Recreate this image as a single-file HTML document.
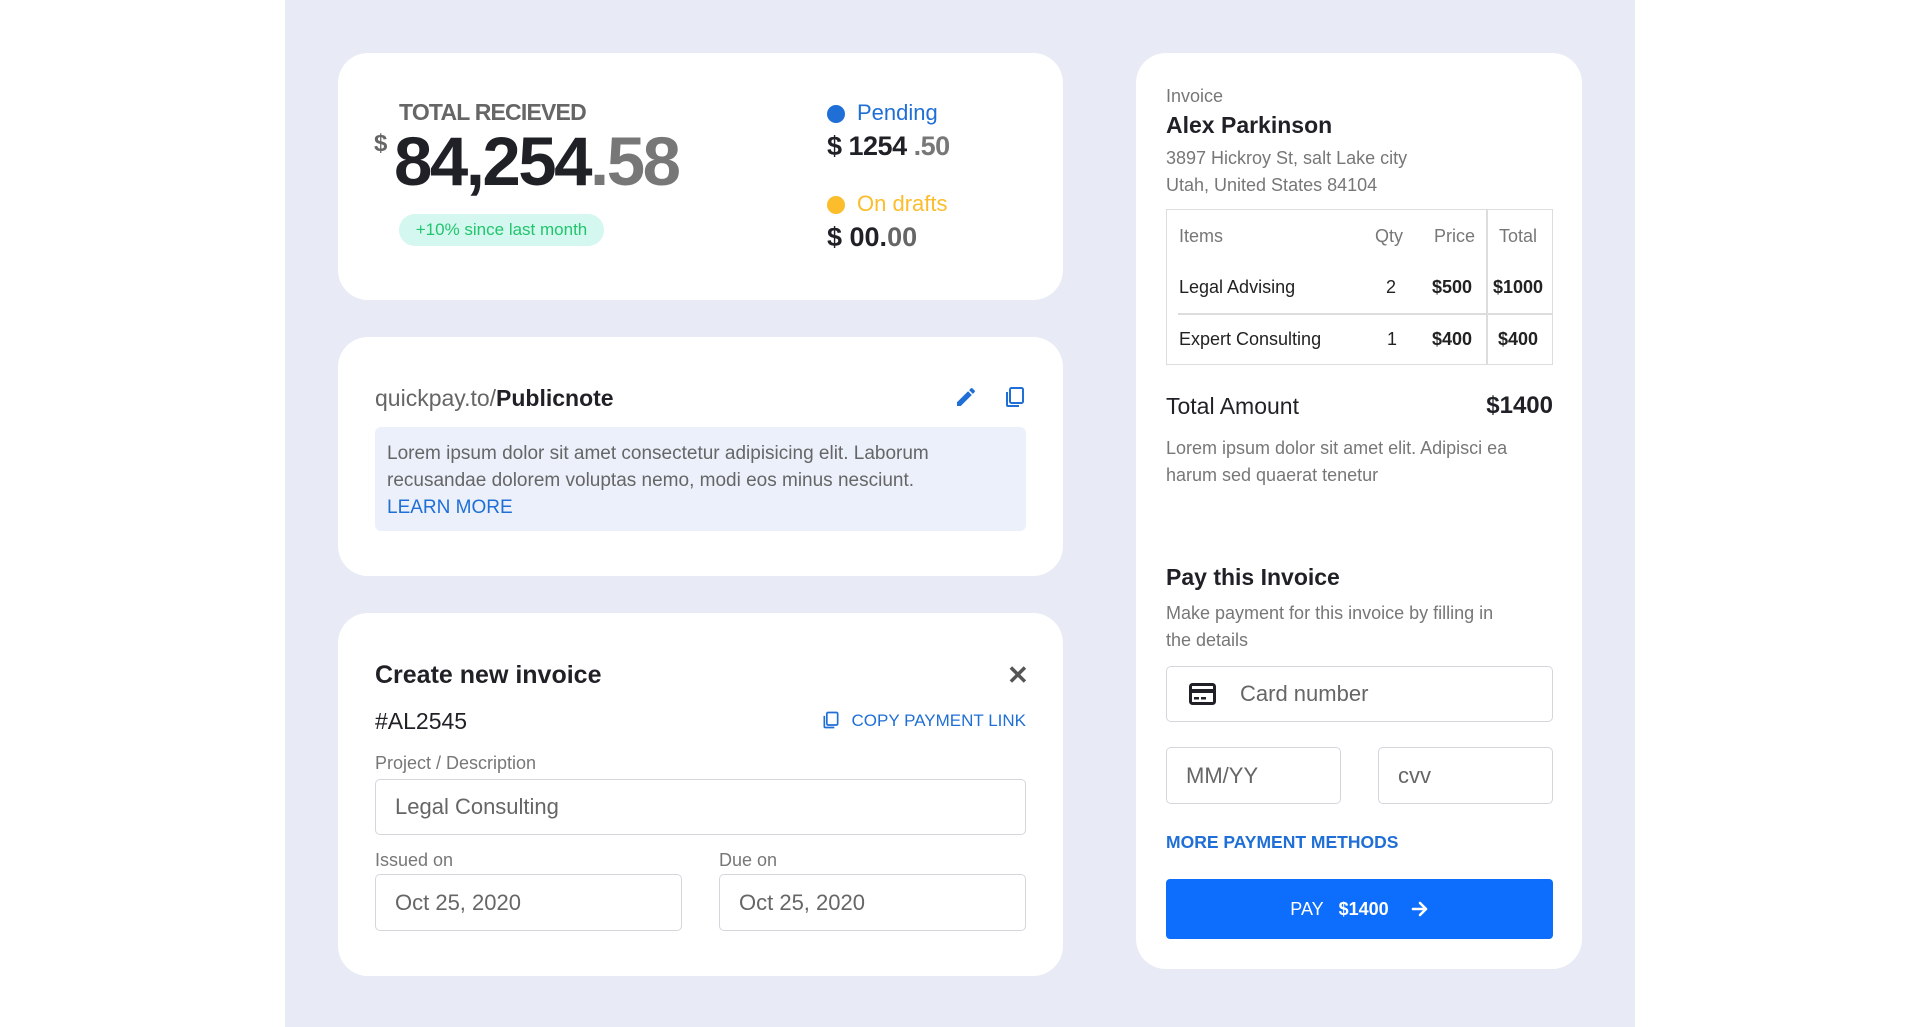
<!DOCTYPE html>
<html><head><meta charset="utf-8"><style>
*{box-sizing:border-box;margin:0;padding:0}
body{width:1920px;height:1027px;background:#fff;font-family:"Liberation Sans",sans-serif;position:relative;overflow:hidden;color:#222}
.bg{position:absolute;left:285px;top:0;width:1350px;height:1027px;background:#e8eaf5}
.card{position:absolute;background:#fff;border-radius:30px}
.a{position:absolute;white-space:nowrap}
.gray{color:#777}
.blue{color:#1f6fd6}
.inp{position:absolute;border:1.5px solid #d4d6dc;border-radius:5px;background:#fff;font-size:22px;color:#666;padding-left:19px;display:flex;align-items:center}
</style></head><body>
<div class="bg"></div>

<div class="card" style="left:338px;top:53px;width:725px;height:247px"></div>
<div class="a" style="left:399px;top:99px;font-size:23px;color:#666;font-weight:bold;letter-spacing:-0.8px">TOTAL RECIEVED</div>
<div class="a" style="left:374px;top:130px;font-size:24px;color:#666;font-weight:bold">$</div>
<div class="a" style="left:394px;top:122px;font-size:69px;font-weight:bold;letter-spacing:-2.5px;color:#1f2126">84,254<span style="color:#777">.58</span></div>
<div class="a" style="left:399px;top:214px;width:205px;height:32px;border-radius:16px;background:#d4f7ef;color:#22c56e;font-size:17px;text-align:center;line-height:32px">+10% since last month</div>
<div class="a" style="left:827px;top:105px;width:18px;height:18px;border-radius:50%;background:#1f6fd6"></div>
<div class="a blue" style="left:857px;top:100px;font-size:22px">Pending</div>
<div class="a" style="left:827px;top:131px;font-size:27px;font-weight:bold;color:#1f2126;letter-spacing:-0.5px">$ 1254 <span style="color:#777">.50</span></div>
<div class="a" style="left:827px;top:196px;width:18px;height:18px;border-radius:50%;background:#fbbd2c"></div>
<div class="a" style="left:857px;top:191px;font-size:22px;color:#fbbd2c">On drafts</div>
<div class="a" style="left:827px;top:222px;font-size:27px;font-weight:bold;color:#1f2126">$ 00.<span style="color:#666">00</span></div>

<div class="card" style="left:338px;top:337px;width:725px;height:239px"></div>
<div class="a" style="left:375px;top:385px;font-size:23px;color:#666">quickpay.to/<span style="color:#1f2126;font-weight:bold">Publicnote</span></div>
<svg class="a" style="left:954px;top:385px" width="24" height="24" viewBox="0 0 24 24"><path d="M3 17.25V21h3.75L17.8 9.94l-3.75-3.75L3 17.25zM20.7 7.04a1 1 0 000-1.41l-2.34-2.34a1 1 0 00-1.41 0l-1.83 1.83 3.75 3.75 1.83-1.83z" fill="#1f6fd6"/></svg>
<svg class="a" style="left:1003px;top:385px" width="24" height="24" viewBox="0 0 24 24" fill="none" stroke="#1f6fd6" stroke-width="2"><rect x="7" y="3" width="13" height="15" rx="1.5"/><path d="M4 7v13a1 1 0 001 1h11"/></svg>
<div class="a" style="left:375px;top:427px;width:651px;height:104px;background:#ebf0fb;border-radius:6px"></div>
<div class="a" style="left:387px;top:440px;font-size:19px;line-height:27px;color:#666">Lorem ipsum dolor sit amet consectetur adipisicing elit. Laborum<br>recusandae dolorem voluptas nemo, modi eos minus nesciunt.<br><span class="blue">LEARN MORE</span></div>

<div class="card" style="left:338px;top:613px;width:725px;height:363px"></div>
<div class="a" style="left:375px;top:661px;font-size:25px;font-weight:bold;color:#1f2126">Create new invoice</div>
<div class="a" style="left:1007px;top:660px;font-size:26px;font-weight:bold;color:#555">✕</div>
<div class="a" style="left:375px;top:708px;font-size:23px;color:#1f2126">#AL2545</div>
<svg class="a" style="left:821px;top:710px" width="20" height="20" viewBox="0 0 24 24" fill="none" stroke="#1f6fd6" stroke-width="2"><rect x="7" y="3" width="13" height="15" rx="1.5"/><path d="M4 7v13a1 1 0 001 1h11"/></svg>
<div class="a blue" style="right:894px;top:711px;font-size:17px">COPY PAYMENT LINK</div>
<div class="a gray" style="left:375px;top:753px;font-size:18px">Project / Description</div>
<div class="inp" style="left:375px;top:779px;width:651px;height:56px">Legal Consulting</div>
<div class="a gray" style="left:375px;top:850px;font-size:18px">Issued on</div>
<div class="a gray" style="left:719px;top:850px;font-size:18px">Due on</div>
<div class="inp" style="left:375px;top:874px;width:307px;height:57px">Oct 25, 2020</div>
<div class="inp" style="left:719px;top:874px;width:307px;height:57px">Oct 25, 2020</div>

<div class="card" style="left:1136px;top:53px;width:446px;height:916px"></div>
<div class="a gray" style="left:1166px;top:86px;font-size:18px">Invoice</div>
<div class="a" style="left:1166px;top:112px;font-size:23px;font-weight:bold;color:#1f2126">Alex Parkinson</div>
<div class="a gray" style="left:1166px;top:145px;font-size:18px;line-height:27px">3897 Hickroy St, salt Lake city<br>Utah, United States 84104</div>
<div class="a" style="left:1166px;top:209px;width:387px;height:156px;border:1.5px solid #ddd"></div>
<div class="a" style="left:1486px;top:209px;width:1.5px;height:156px;background:#ddd"></div>
<div class="a" style="left:1178px;top:313px;width:374px;height:1.5px;background:#ddd"></div>
<div class="a gray" style="left:1179px;top:226px;font-size:18px">Items</div>
<div class="a gray" style="left:1375px;top:226px;font-size:18px">Qty</div>
<div class="a gray" style="left:1434px;top:226px;font-size:18px">Price</div>
<div class="a gray" style="left:1499px;top:226px;font-size:18px">Total</div>
<div class="a" style="left:1179px;top:277px;font-size:18px">Legal Advising</div>
<div class="a" style="left:1386px;top:277px;font-size:18px">2</div>
<div class="a" style="left:1432px;top:277px;font-size:18px;font-weight:600">$500</div>
<div class="a" style="left:1493px;top:277px;font-size:18px;font-weight:600">$1000</div>
<div class="a" style="left:1179px;top:329px;font-size:18px">Expert Consulting</div>
<div class="a" style="left:1387px;top:329px;font-size:18px">1</div>
<div class="a" style="left:1432px;top:329px;font-size:18px;font-weight:600">$400</div>
<div class="a" style="left:1498px;top:329px;font-size:18px;font-weight:600">$400</div>
<div class="a" style="left:1166px;top:393px;font-size:23px;color:#1f2126">Total Amount</div>
<div class="a" style="right:367px;top:392px;font-size:24px;font-weight:bold;color:#1f2126">$1400</div>
<div class="a gray" style="left:1166px;top:435px;font-size:18px;line-height:27px">Lorem ipsum dolor sit amet elit. Adipisci ea<br>harum sed quaerat tenetur</div>
<div class="a" style="left:1166px;top:564px;font-size:23px;font-weight:bold;color:#1f2126">Pay this Invoice</div>
<div class="a gray" style="left:1166px;top:600px;font-size:18px;line-height:27px">Make payment for this invoice by filling in<br>the details</div>
<div class="inp" style="left:1166px;top:666px;width:387px;height:56px;padding-left:22px"><svg width="27" height="22" viewBox="0 0 27 22"><rect x="1.5" y="1.5" width="24" height="19" rx="2" fill="none" stroke="#1f2126" stroke-width="3"/><rect x="1.5" y="6" width="24" height="4" fill="#1f2126"/><rect x="5" y="14" width="5" height="2.5" fill="#1f2126"/><rect x="12" y="14" width="5" height="2.5" fill="#1f2126"/></svg><span style="margin-left:24px">Card number</span></div>
<div class="inp" style="left:1166px;top:747px;width:175px;height:57px">MM/YY</div>
<div class="inp" style="left:1378px;top:747px;width:175px;height:57px">cvv</div>
<div class="a" style="left:1166px;top:832px;font-size:17.5px;font-weight:bold;color:#1f6fd6">MORE PAYMENT METHODS</div>
<div class="a" style="left:1166px;top:879px;width:387px;height:60px;background:#0d6efd;border-radius:4px;color:#fff;font-size:18px;display:flex;align-items:center;justify-content:center">PAY&nbsp;&nbsp;&nbsp;<b>$1400</b><svg style="margin-left:22px" width="18" height="16" viewBox="0 0 18 16" fill="none" stroke="#fff" stroke-width="2.6" stroke-linecap="round" stroke-linejoin="round"><path d="M2 8h13M9 2l6 6-6 6"/></svg></div>
</body></html>
